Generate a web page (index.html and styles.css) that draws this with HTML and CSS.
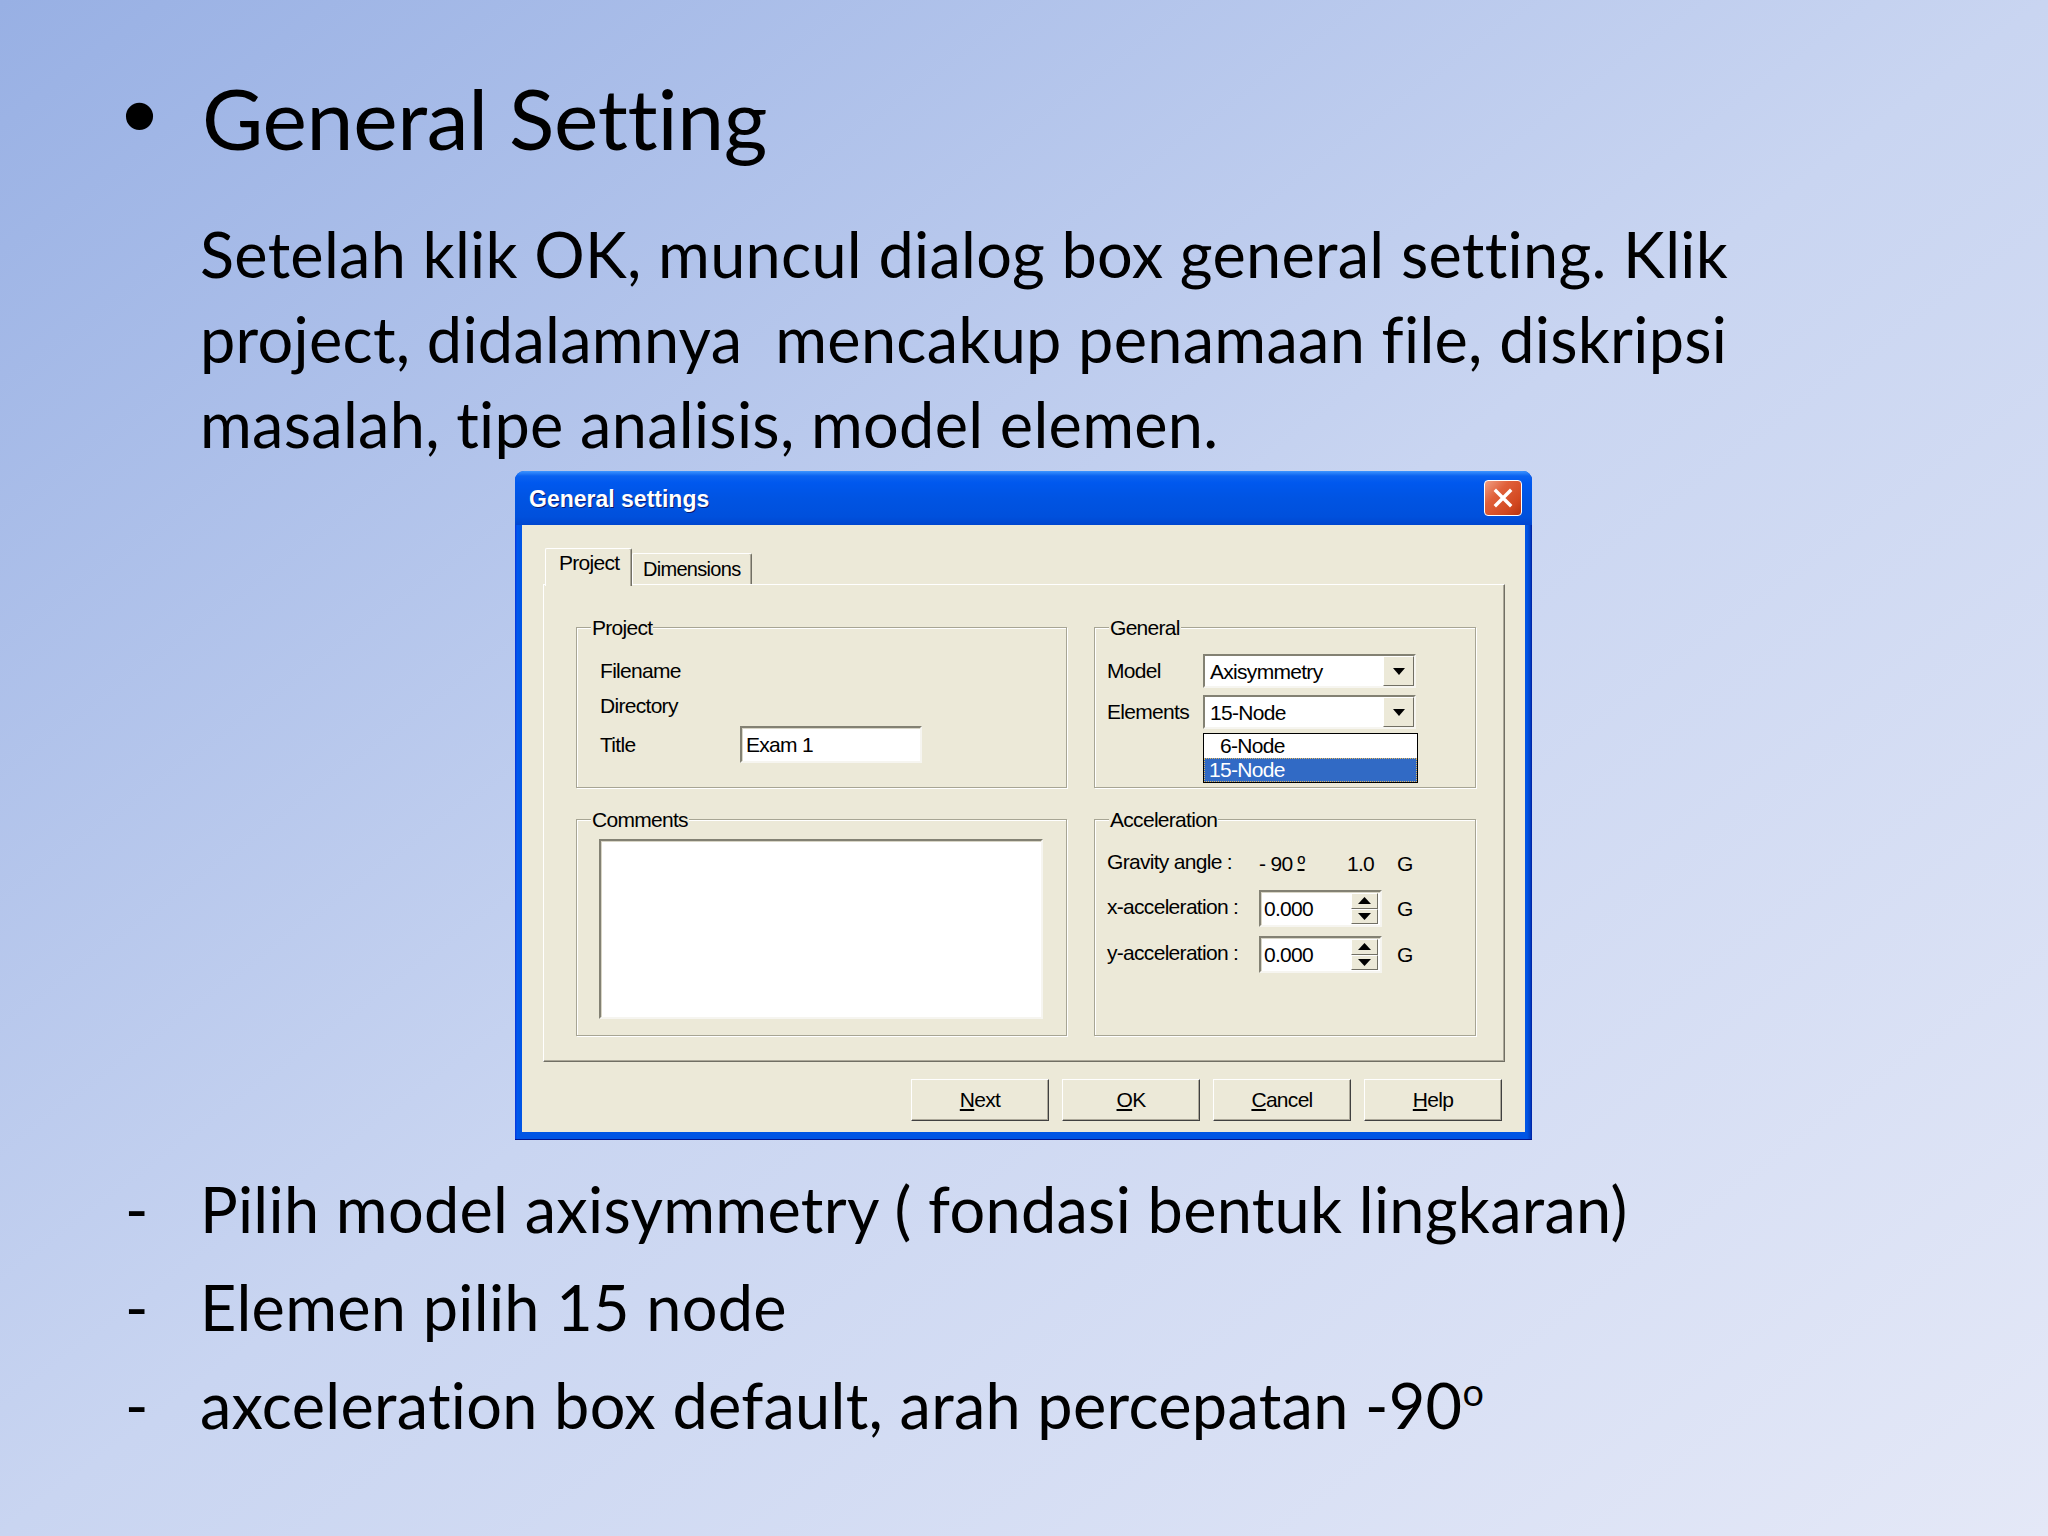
FILE: index.html
```html
<!DOCTYPE html>
<html>
<head>
<meta charset="utf-8">
<title>General Setting</title>
<link rel="stylesheet" href="styles.css">
</head>
<body>
<div class="slide">
  <h1 class="title"><span class="bullet">•</span><span class="title-text">General Setting</span></h1>
  <p class="para">Setelah klik OK, muncul dialog box general setting. Klik<br>project, didalamnya&nbsp; mencakup penamaan file, diskripsi<br>masalah, tipe analisis, model elemen.</p>

  <div class="dialog">
    <div class="titlebar">
      <span class="caption">General settings</span>
      <span class="close"><svg width="22" height="22" viewBox="0 0 22 22"><path d="M4 4 L18 18 M18 4 L4 18" stroke="#fff" stroke-width="3.4" stroke-linecap="square"/></svg></span>
    </div>
    <div class="client">
      <div class="tabs">
        <div class="tab active">Project</div>
        <div class="tab dims">Dimensions</div>
      </div>
      <div class="panel">
        <div class="group g-project">
          <span class="legend">Project</span>
          <div class="prow"><span class="plbl">Filename</span></div>
          <div class="prow"><span class="plbl">Directory</span></div>
          <div class="prow tall"><span class="plbl">Title</span><span class="field title-field">Exam 1</span></div>
        </div>

        <div class="group g-general">
          <span class="legend">General</span>
          <div class="grow"><span class="glbl">Model</span><span class="combo"><span class="combo-text">Axisymmetry</span><span class="combo-btn"><svg width="12" height="7" viewBox="0 0 12 7"><path d="M0 0 H12 L6 7 Z" fill="#000"/></svg></span></span></div>
          <div class="grow"><span class="glbl">Elements</span><span class="combo"><span class="combo-text">15-Node</span><span class="combo-btn"><svg width="12" height="7" viewBox="0 0 12 7"><path d="M0 0 H12 L6 7 Z" fill="#000"/></svg></span></span></div>
          <div class="droplist">
            <div class="item">&#8199;6-Node</div>
            <div class="item selected">15-Node</div>
          </div>
        </div>

        <div class="group g-comments">
          <span class="legend">Comments</span>
          <div class="memo"></div>
        </div>

        <div class="group g-accel">
          <span class="legend">Acceleration</span>
          <div class="agrid">
            <span class="albl">Gravity angle :</span><span>- 90 <span class="ord">º</span></span><span>1.0</span><span>G</span>
            <span class="albl">x-acceleration :</span>
            <span class="field spin-field"><span>0.000</span><span class="spin"><span class="spin-half"><svg width="13" height="7" viewBox="0 0 13 7"><path d="M0 7 H13 L6.5 0 Z" fill="#000"/></svg></span><span class="spin-half"><svg width="13" height="7" viewBox="0 0 13 7"><path d="M0 0 H13 L6.5 7 Z" fill="#000"/></svg></span></span></span>
            <span>G</span>
            <span class="albl">y-acceleration :</span>
            <span class="field spin-field"><span>0.000</span><span class="spin"><span class="spin-half"><svg width="13" height="7" viewBox="0 0 13 7"><path d="M0 7 H13 L6.5 0 Z" fill="#000"/></svg></span><span class="spin-half"><svg width="13" height="7" viewBox="0 0 13 7"><path d="M0 0 H13 L6.5 7 Z" fill="#000"/></svg></span></span></span>
            <span>G</span>
          </div>
        </div>
      </div>
      <div class="buttons">
        <span class="btn"><u>N</u>ext</span>
        <span class="btn"><u>O</u>K</span>
        <span class="btn"><u>C</u>ancel</span>
        <span class="btn"><u>H</u>elp</span>
      </div>
    </div>
  </div>

  <ul class="points">
    <li><span class="dash">-</span><span>Pilih model axisymmetry ( fondasi bentuk lingkaran)</span></li>
    <li><span class="dash">-</span><span>Elemen pilih 15 node</span></li>
    <li><span class="dash">-</span><span>axceleration box default, arah percepatan -90<sup>o</sup></span></li>
  </ul>
</div>
</body>
</html>
```

FILE: styles.css
```css
* { box-sizing: border-box; }
html, body { margin: 0; padding: 0; }
body {
  width: 2048px;
  height: 1536px;
  overflow: hidden;
  background: linear-gradient(to bottom right, #98b0e4 0%, #c9d5f1 50%, #e4e8f7 100%);
  font-family: Lato, "Open Sans", sans-serif;
  font-variant-ligatures: none;
  color: #000;
}
.slide { padding-top: 65px; }

.title {
  display: flex;
  align-items: baseline;
  margin: 0;
  height: 100px;
  line-height: 100px;
  font-size: 84px;
  font-weight: normal;
  padding-left: 122px;
}
.bullet { width: 80px; font-family: "Liberation Sans", sans-serif; font-size: 100px; }
.title-text { letter-spacing: -0.3px; }

.para {
  margin: 46px 0 0 200px;
  font-size: 63px;
  line-height: 85px;
  letter-spacing: 0.3px;
}

/* ---------- XP dialog ---------- */
.dialog {
  margin: 5px 0 0 515px;
  width: 1017px;
  height: 669px;
  display: flex;
  flex-direction: column;
  padding: 0 7px 7px;
  background: linear-gradient(to right, #0831d9 0, #0058ee 2px, #0055e5 5px, #0055e5 calc(100% - 5px), #0042c8 calc(100% - 2px), #001ea0 100%);
  border-radius: 9px 9px 0 0;
  border-bottom: 1px solid #00138c;
  font-family: "Liberation Sans", Arial, sans-serif;
  font-size: 21px;
  letter-spacing: -0.7px;
}
.titlebar {
  flex: none;
  height: 54px;
  margin: 0 -7px;
  padding: 3px 10px 0 14px;
  display: flex;
  align-items: center;
  justify-content: space-between;
  border-radius: 9px 9px 0 0;
  background: linear-gradient(#3d95ff 0, #0a62f0 5px, #0058ee 12px, #0054e3 50%, #0050dc 85%, #0046cf 100%);
}
.caption {
  color: #fff;
  font-weight: bold;
  font-size: 23px;
  letter-spacing: 0;
  text-shadow: 1px 1px 0 #0a1a6e;
}
.close {
  width: 38px;
  height: 36px;
  margin-top: -3px;
  border: 1px solid #fff;
  border-radius: 4px;
  background: linear-gradient(135deg, #f0a085 0%, #e0603a 35%, #d24820 75%, #b83410 100%);
  display: flex;
  align-items: center;
  justify-content: center;
}

.client {
  flex: 1;
  background: #ece9d8;
  padding: 23px 20px 0 21px;
}
.tabs {
  display: flex;
  align-items: flex-end;
  height: 36px;
  margin-left: 2px;
  position: relative;
  z-index: 1;
}
.tab {
  height: 31px;
  width: 120px;
  padding: 4px 0 0 10px;
  line-height: 22px;
  font-size: 20px;
  border: 1px solid;
  border-color: #fff #716f64 transparent #fff;
  border-bottom: none;
  border-radius: 2px 2px 0 0;
  background: #ece9d8;
  box-shadow: inset -1px 0 0 #aca899;
}
.tab.active {
  width: 87px;
  height: 38px;
  margin-bottom: -2px;
  padding: 3px 0 0 13px;
  font-size: 21px;
}
.panel {
  height: 478px;
  border: 1px solid;
  border-color: #fff #716f64 #716f64 #fff;
  box-shadow: inset -1px -1px 0 #aca899;
  padding: 42px 0 0 32px;
  display: grid;
  grid-template-columns: 491px 382px;
  grid-template-rows: 161px 217px;
  column-gap: 27px;
  row-gap: 31px;
}
.group {
  position: relative;
  border: 1px solid #a7a594;
  box-shadow: inset 1px 1px 0 #fff, 1px 1px 0 #fff;
}
.legend {
  position: absolute;
  top: -12px;
  left: 14px;
  padding: 0 1px;
  line-height: 24px;
  background: #ece9d8;
}

/* project group */
.g-project { padding: 25px 0 0 23px; }
.prow { display: flex; align-items: center; height: 35px; }
.prow.tall { height: 37px; margin-top: 3px; }
.plbl { width: 140px; }
.field {
  display: flex;
  align-items: center;
  background: #fff;
  border: 2px solid;
  border-color: #838173 #f6f5f0 #f6f5f0 #838173;
  box-shadow: inset 1px 1px 0 #d8d5c6;
}
.title-field { width: 182px; height: 37px; padding-left: 4px; }

/* general group */
.g-general { padding: 26px 0 0 12px; }
.grow { display: flex; align-items: center; height: 34px; margin-bottom: 7px; }
.glbl { width: 96px; }
.combo {
  width: 213px;
  height: 34px;
  display: flex;
  align-items: stretch;
  background: #fff;
  border: 2px solid;
  border-color: #838173 #f6f5f0 #f6f5f0 #838173;
}
.combo-text { flex: 1; display: flex; align-items: center; padding-left: 5px; padding-top: 2px; }
.combo-btn {
  width: 31px;
  display: flex;
  align-items: center;
  justify-content: center;
  background: #ece9d8;
  border: 1px solid;
  border-color: #fff #716f64 #716f64 #fff;
}
.droplist {
  margin: -3px 0 0 96px;
  width: 215px;
  border: 1px solid #000;
  background: #fff;
}
.item { height: 24px; line-height: 24px; padding-left: 5px; }
.item.selected {
  background: #316ac5;
  color: #fff;
  outline: 1px dotted #e0b860;
  outline-offset: -1px;
}

/* comments */
.g-comments { padding: 19px 0 0 22px; }
.memo {
  width: 444px;
  height: 180px;
  background: #fff;
  border: 2px solid;
  border-color: #838173 #f6f5f0 #f6f5f0 #838173;
  box-shadow: inset 1px 1px 0 #d8d5c6;
}

/* acceleration */
.g-accel { padding: 26px 0 0 12px; }
.agrid {
  display: grid;
  grid-template-columns: 152px 88px 50px auto;
  grid-template-rows: 35px 37px 37px;
  row-gap: 9px;
  align-items: center;
}
.albl { padding-bottom: 3px; }
.ord { text-decoration: underline; text-underline-offset: -2px; }
.spin-field {
  grid-column: 2 / span 2;
  width: 123px;
  height: 37px;
  padding-left: 3px;
  justify-content: space-between;
}
.spin {
  width: 27px;
  height: 31px;
  margin-right: 2px;
  display: flex;
  flex-direction: column;
}
.spin-half {
  flex: 1;
  display: flex;
  align-items: center;
  justify-content: center;
  background: #ece9d8;
  border: 1px solid;
  border-color: #fff #716f64 #716f64 #fff;
}

/* buttons */
.buttons {
  display: flex;
  justify-content: flex-end;
  gap: 13px;
  margin: 17px 3px 0 0;
}
.btn {
  width: 138px;
  height: 42px;
  display: flex;
  align-items: center;
  justify-content: center;
  background: #ece9d8;
  border: 1px solid;
  border-color: #fff #404040 #404040 #fff;
  box-shadow: inset -1px -1px 0 #aca899;
}

/* bottom points */
.points {
  list-style: none;
  margin: 20px 0 0;
  padding: 0;
  font-size: 63px;
  line-height: 98px;
  letter-spacing: 0.3px;
}
.points li { display: flex; }
.dash { width: 200px; padding-left: 125px; letter-spacing: 0; }
.points sup { font-size: 60%; line-height: 0; vertical-align: 0.6em; }
```
